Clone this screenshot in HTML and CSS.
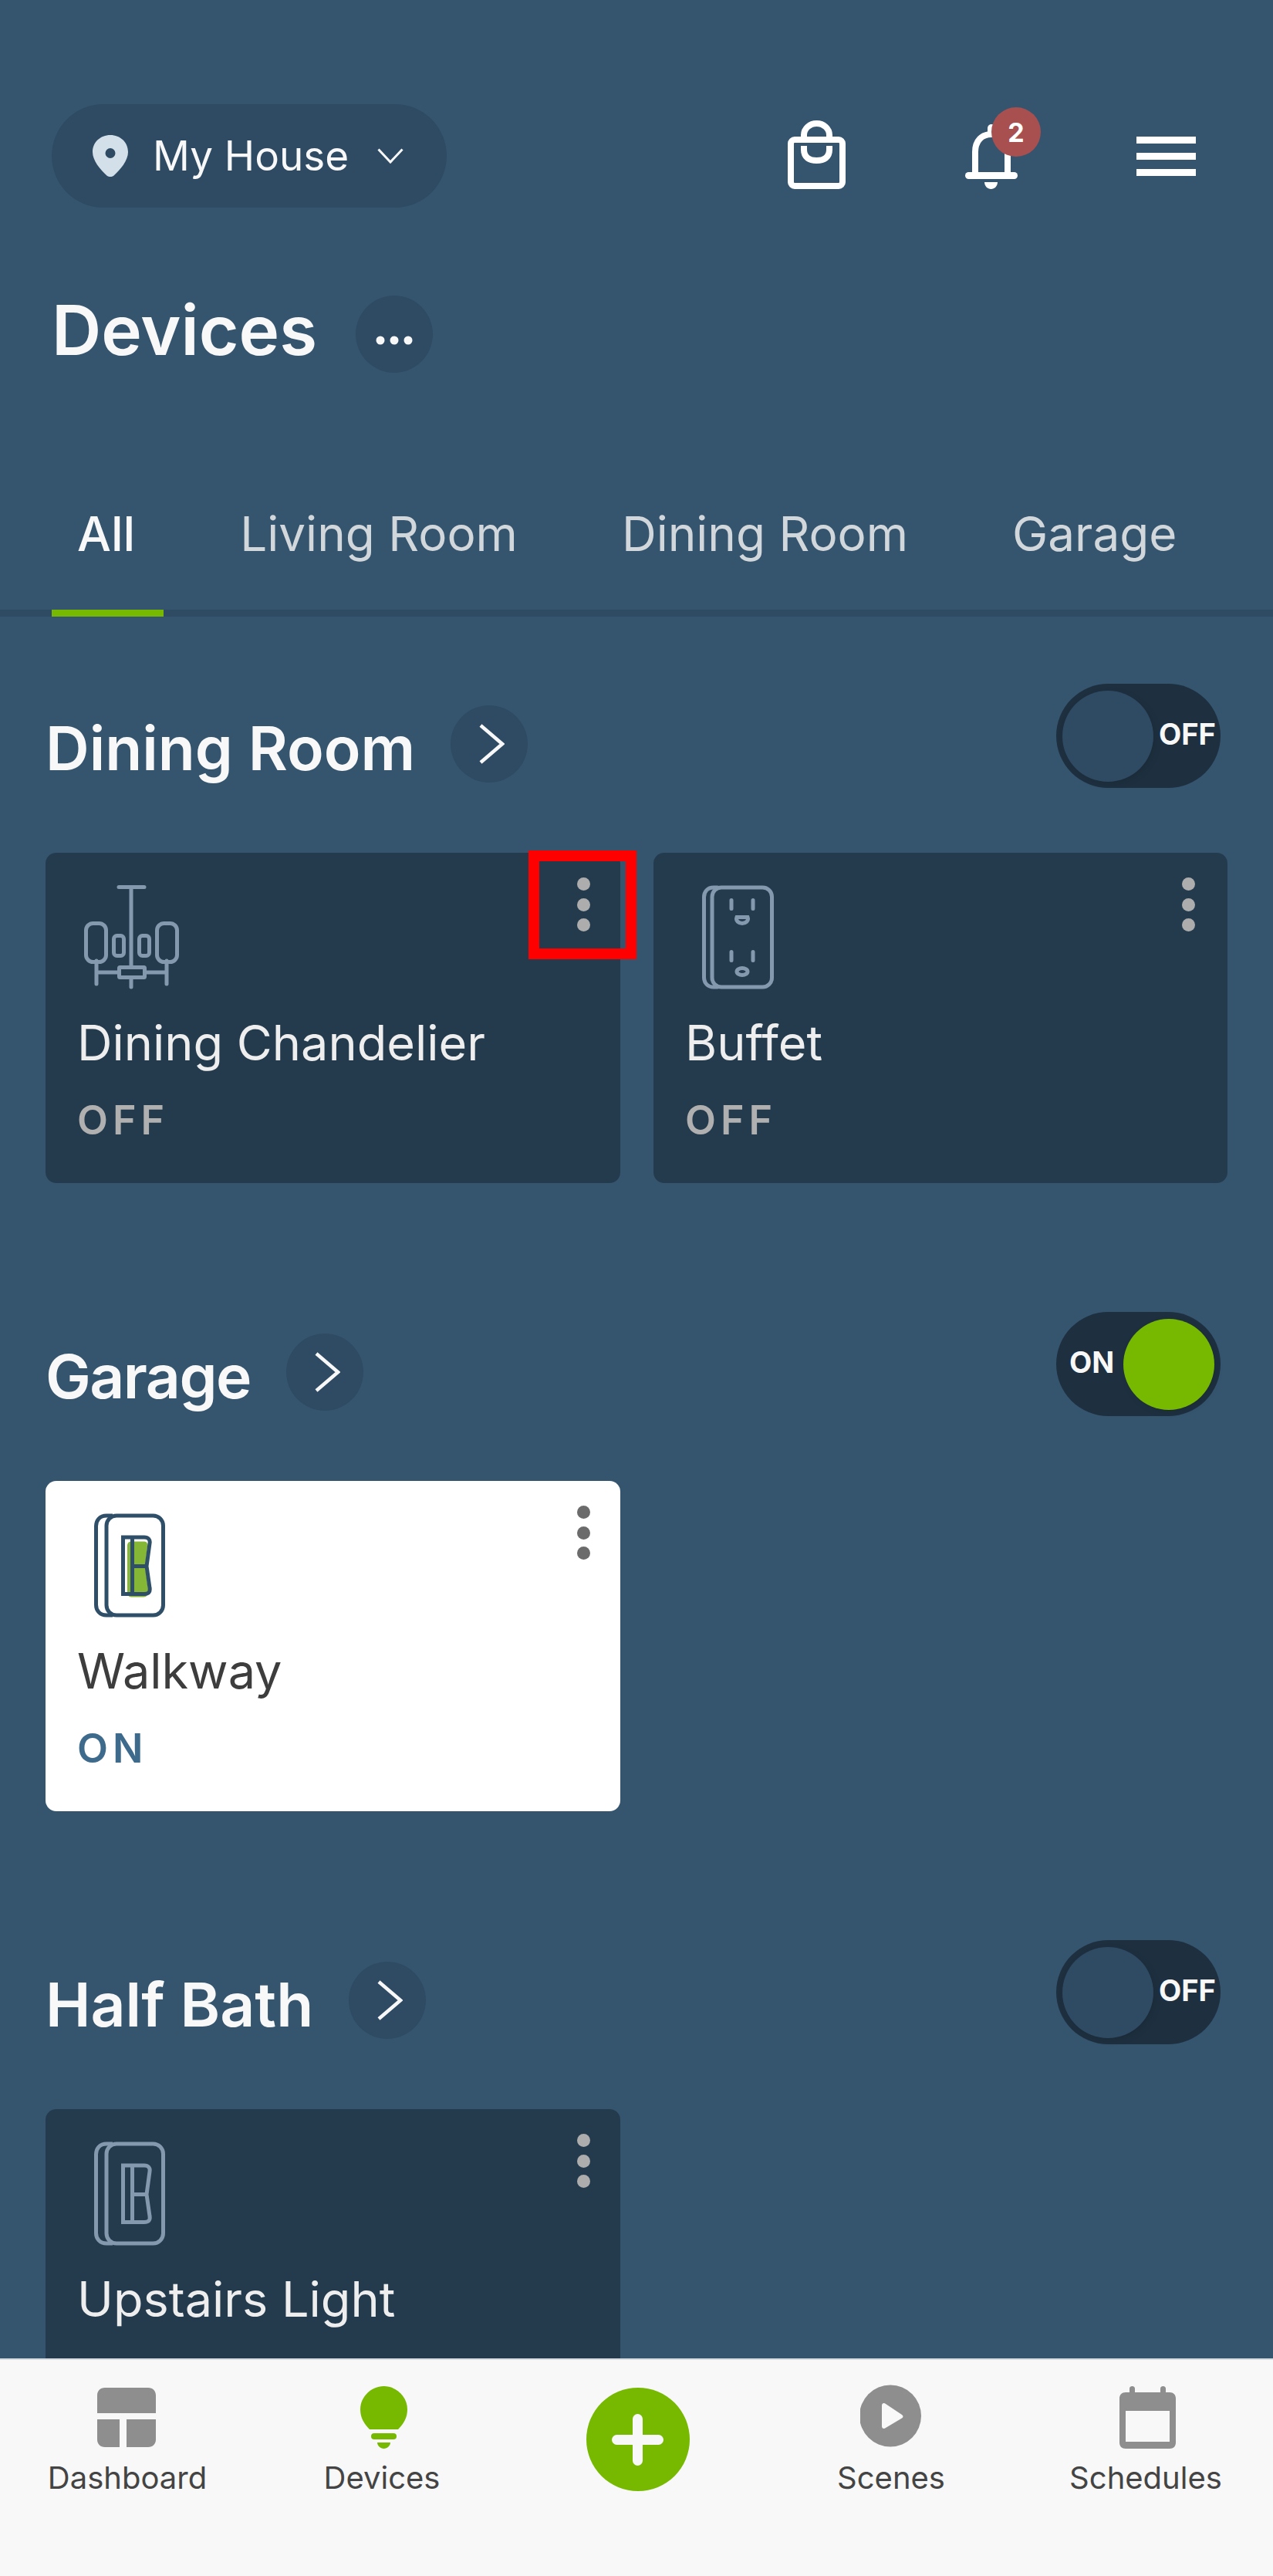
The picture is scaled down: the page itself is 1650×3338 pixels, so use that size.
FILE: index.html
```html
<!DOCTYPE html>
<html lang="en">
<head>
<meta charset="utf-8">
<title>Devices</title>
<link rel="stylesheet" href="styles.css">
</head>
<body>
<div class="app">
  <main class="main">
    <header class="topbar">
      <div class="house-pill">
        <svg class="pin" viewBox="0 0 46 54"><path fill-rule="evenodd" fill="#d3e0ea" d="M23 0C10 0 0 9.500 0 22c0 11 10 23 19 31 2 1.500 6 1.500 8 0 9-8 19-20 19-31C46 9.500 36 0 23 0zm0 17a6 6 0 1 1 0 13 6 6 0 0 1 0-13z"/></svg>
        <span class="house-name">My House</span>
        <svg class="chev" viewBox="0 0 34 20"><path d="M1.500 1.500 17 18 32.500 1.500" fill="none" stroke="#f8f8f8" stroke-width="3"/></svg>
      </div>
      <div class="top-icons">
        <svg class="bag" viewBox="0 0 75 89" fill="none" stroke="#fff" stroke-width="8">
          <rect x="4" y="25" width="67" height="60" rx="5"/>
          <path d="M21 25v-6a16.500 15 0 0 1 33 0v6"/>
          <path d="M21 33v5c0 10 7 14 16.500 14S54 48 54 38v-5"/>
        </svg>
        <div class="bell-wrap">
          <svg class="bell" viewBox="0 0 68 85">
            <path d="M13 64V37c0-15 9-23 21-23s21 8 21 23v27" fill="none" stroke="#fff" stroke-width="8"/>
            <path d="M29 16V6a5 5 0 0 1 10 0v10z" fill="#fff"/>
            <rect x="0" y="63" width="68" height="9" rx="4.500" fill="#fff"/>
            <path d="M25 76h17c0 5-4 9-8.500 9S25 81 25 76z" fill="#fff"/>
          </svg>
          <span class="badge">2</span>
        </div>
        <div class="burger"><i></i><i></i><i></i></div>
      </div>
    </header>

    <div class="title-row">
      <h1 class="title">Devices</h1>
      <div class="round-btn"><svg class="dots" viewBox="0 0 48 12"><circle cx="6" cy="6" r="5.500"/><circle cx="24" cy="6" r="5.500"/><circle cx="42" cy="6" r="5.500"/></svg></div>
    </div>

    <nav class="tabs">
      <span class="tab tab-active">All</span>
      <span class="tab">Living Room</span>
      <span class="tab">Dining Room</span>
      <span class="tab">Garage</span>
    </nav>

    <section class="room">
      <div class="room-head">
        <h2 class="room-name">Dining Room</h2>
        <div class="round-btn head-btn"><svg class="arrow" viewBox="0 0 33 52"><path d="M2 2l28 24L2 50" fill="none" stroke="#f8f8f8" stroke-width="4.500"/></svg></div>
        <div class="toggle toggle-off"><span class="knob"></span><span class="toggle-label">OFF</span></div>
      </div>
      <div class="cards">
        <article class="card">
          <svg class="dev-icon chandelier" viewBox="0 0 124 135" fill="none" stroke="#8499ad" stroke-width="5" stroke-linecap="round">
            <path d="M45 2.500h33M61 3v103"/>
            <rect x="2.500" y="49.500" width="26" height="50" rx="9"/>
            <rect x="94.500" y="49.500" width="26" height="50" rx="9"/>
            <rect x="38.500" y="65.500" width="13" height="26" rx="4"/>
            <rect x="71.500" y="65.500" width="13" height="26" rx="4"/>
            <rect x="45.500" y="106.500" width="33" height="13" rx="1"/>
            <path d="M16 98v30M107 98v30M16 113h29M79 113h28M61 122v10"/>
          </svg>
          <h3 class="dev-name">Dining Chandelier</h3>
          <p class="dev-state">OFF</p>
          <div class="kebab"><i></i><i></i><i></i></div>
          <div class="highlight"></div>
        </article>
        <article class="card">
          <svg class="dev-icon outlet" viewBox="0 0 93 134" fill="none" stroke="#8499ad" stroke-width="5" stroke-linecap="round">
            <path d="M20 2.500H15C7 2.500 2.500 8 2.500 15v104c0 7 4.500 12.500 12.500 12.500h5"/>
            <rect x="13" y="2.500" width="77.500" height="129" rx="12"/>
            <path d="M38 19v11M66 19v11M38 86v11M66 86v11"/>
            <path d="M45 41h14c2 5-3 8-7 8s-9-3-7-8z"/>
            <ellipse cx="52" cy="111.500" rx="7" ry="4.500"/>
          </svg>
          <h3 class="dev-name">Buffet</h3>
          <p class="dev-state">OFF</p>
          <div class="kebab"><i></i><i></i><i></i></div>
        </article>
      </div>
    </section>

    <section class="room">
      <div class="room-head">
        <h2 class="room-name room-name-tight">Garage</h2>
        <div class="round-btn head-btn"><svg class="arrow" viewBox="0 0 33 52"><path d="M2 2l28 24L2 50" fill="none" stroke="#f8f8f8" stroke-width="4.500"/></svg></div>
        <div class="toggle toggle-on"><span class="toggle-label">ON</span><span class="knob"></span></div>
      </div>
      <div class="cards">
        <article class="card card-on">
          <svg class="dev-icon switch" viewBox="0 0 92 134" fill="none" stroke="#2f4f69" stroke-width="5">
            <path d="M48 36h16c4 0 6 2 5 7l-3 25 4 30c1 6-1 10-6 10H48c-3 0-5-3-5-6V42c0-4 2-6 5-6z" fill="#86b636" stroke="none"/>
            <path d="M24 2.500H16C7 2.500 2.500 9 2.500 16v102c0 7 4.500 13.500 13.500 13.500h8"/>
            <rect x="16" y="2.500" width="73.500" height="129" rx="13"/>
            <path d="M37.500 30.500H65c5 0 8 3 7 8l-4 29.500 4 28c1 6-2 8-7 8H37.500zM49.500 30v73M49 68h19"/>
          </svg>
          <h3 class="dev-name">Walkway</h3>
          <p class="dev-state">ON</p>
          <div class="kebab"><i></i><i></i><i></i></div>
        </article>
      </div>
    </section>

    <section class="room">
      <div class="room-head">
        <h2 class="room-name">Half Bath</h2>
        <div class="round-btn head-btn"><svg class="arrow" viewBox="0 0 33 52"><path d="M2 2l28 24L2 50" fill="none" stroke="#f8f8f8" stroke-width="4.500"/></svg></div>
        <div class="toggle toggle-off"><span class="knob"></span><span class="toggle-label">OFF</span></div>
      </div>
      <div class="cards">
        <article class="card">
          <svg class="dev-icon switch" viewBox="0 0 92 134" fill="none" stroke="#8499ad" stroke-width="5">
            <path d="M24 2.500H16C7 2.500 2.500 9 2.500 16v102c0 7 4.500 13.500 13.500 13.500h8"/>
            <rect x="16" y="2.500" width="73.500" height="129" rx="13"/>
            <path d="M37.500 30.500H65c5 0 8 3 7 8l-4 29.500 4 28c1 6-2 8-7 8H37.500zM49.500 30v73M49 68h19"/>
          </svg>
          <h3 class="dev-name">Upstairs Light</h3>
          <div class="kebab"><i></i><i></i><i></i></div>
        </article>
      </div>
    </section>
  </main>

  <footer class="bottom-nav">
    <div class="nav-item">
      <svg class="nav-icon" viewBox="-1 -4 80 83"><path fill="#8e8e8e" d="M10 0h56c6 0 10 4 10 10v23H0V10C0 4 4 0 10 0zM0 41h29v36H10C4 77 0 73 0 67zM38 41h38v26c0 6-4 10-10 10H38z"/></svg>
      <span class="nav-label">Dashboard</span>
    </div>
    <div class="nav-item">
      <svg class="nav-icon" viewBox="-12 -2 80 83"><path fill="#76b900" d="M30.500 0C47 0 61 14 61 30c0 11-5 19-12 26H12C5 49 0 41 0 30 0 14 14 0 30.500 0z"/><rect x="14" y="61" width="33" height="8" rx="4" fill="#76b900"/><path fill="#76b900" d="M22 73h17c0 4-4 8-8.500 8S22 77 22 73z"/></svg>
      <span class="nav-label">Devices</span>
    </div>
    <div class="nav-item">
      <div class="add-btn"><svg class="plus" viewBox="0 0 67 67"><path d="M6.500 33.500h54M33.500 6.500v54" stroke="#f8f8f8" stroke-width="13" stroke-linecap="round"/></svg></div>
    </div>
    <div class="nav-item">
      <svg class="nav-icon" viewBox="1 0 80 83"><circle cx="40" cy="40.500" r="40" fill="#8e8e8e"/><path fill="#f8f8f8" d="M29 27c0-3 3-4 5-2l21 14c2 1.500 2 3 0 4.500L34 56c-2 2-5 1-5-2z"/></svg>
      <span class="nav-label">Scenes</span>
    </div>
    <div class="nav-item">
      <svg class="nav-icon" viewBox="-6 -2 80 83"><path fill-rule="evenodd" fill="#8e8e8e" d="M13 3c0-4 7-4 7 0v5h33V3c0-4 7-4 7 0v5h5c5 0 8 3 8 8v57c0 5-3 8-8 8H8c-5 0-8-3-8-8V16c0-5 3-8 8-8h5zM8 32v40h57V32z"/></svg>
      <span class="nav-label">Schedules</span>
    </div>
  </footer>
</div>
</body>
</html>
```
FILE: styles.css
```css
* { box-sizing: border-box; }
html, body { margin: 0; padding: 0; }
body { background: #35556f; font-family: Inter, "Noto Sans", sans-serif; }
h1, h2, h3, p { margin: 0; }

.app { width: 1650px; height: 3338px; display: flex; flex-direction: column; overflow: hidden; background: #35556f; }
.main { flex: 1; min-height: 0; overflow: hidden; }

.topbar { display: flex; justify-content: space-between; align-items: flex-start; padding: 135px 100px 0 67px; height: 269px; }
.house-pill { width: 512px; height: 134px; border-radius: 67px; background: #2f4b63; display: flex; align-items: center; padding-left: 53px; }
.pin { width: 46px; height: 54px; }
.house-name { margin-left: 32px; font-size: 53px; color: #f8f8f8; line-height: 1; }
.chev { width: 34px; height: 20px; margin-left: 37px; }
.top-icons { position: relative; width: 529px; height: 100px; display: flex; align-items: flex-start; }
.bag { width: 75px; height: 89px; margin-top: 21px; }
.bell-wrap { position: relative; width: 68px; height: 85px; margin-top: 25px; margin-left: 155px; }
.bell { width: 68px; height: 85px; display: block; }
.badge { position: absolute; left: 34px; top: -21px; width: 64px; height: 64px; border-radius: 50%; background: #a84f50; color: #fff; font-size: 34px; font-weight: 700; display: flex; align-items: center; justify-content: center; }
.burger { width: 77px; margin-top: 42px; margin-left: 154px; display: flex; flex-direction: column; gap: 12px; }
.burger i { display: block; height: 9px; background: #fff; }

.title-row { display: flex; align-items: center; padding-left: 67px; height: 100px; margin-top: 114px; gap: 50px; }
.title { font-size: 89px; font-weight: 600; color: #f8f8f8; line-height: 1; margin-bottom: 12px; }
.round-btn { width: 100px; height: 100px; border-radius: 50%; background: #2f4b63; display: flex; align-items: center; justify-content: center; flex: none; }
.dots { width: 48px; height: 12px; fill: #f8f8f8; margin-top: 16px; }
.arrow { width: 33px; height: 52px; margin-left: 7px; }

.tabs { display: flex; height: 186px; margin-top: 130px; border-bottom: 9px solid #2f4b63; padding-left: 67px; align-items: stretch; }
.tab { font-size: 62px; color: #d2d7dc; padding: 48px 33px 0; margin-right: 69px; border-bottom: 9px solid transparent; margin-bottom: -9px; line-height: 1; }
.tab-active { color: #f8f8f8; border-bottom-color: #76b900; font-weight: 500; padding-right: 37px; margin-right: 66px; }

.room { padding: 0 59px; margin-top: 167px; }
.tabs + .room { margin-top: 87px; }
.room-head { display: flex; align-items: flex-start; height: 135px; gap: 46px; }
.room-name { font-size: 78.500px; font-weight: 600; color: #f8f8f8; line-height: 1; margin-top: 45px; }
.room-name-tight { letter-spacing: -1.500px; }
.head-btn { margin-top: 28px; }
.toggle { margin-left: auto; margin-right: 9px; width: 213px; height: 135px; border-radius: 68px; background: #1e3040; display: flex; align-items: center; flex: none; padding: 0 8px; }
.knob { display: block; width: 118px; height: 118px; border-radius: 50%; flex: none; box-shadow: 3px 3px 8px rgba(0, 0, 0, 0.12); }
.toggle-off .knob { background: #2f4b63; }
.toggle-on .knob { background: #76b900; margin-left: auto; }
.toggle-label { color: #f8f8f8; font-size: 38px; font-weight: 700; line-height: 1; margin-top: -6px; }
.toggle-off .toggle-label { margin-left: 7px; }
.toggle-on .toggle-label { margin-left: 9px; }

.cards { display: grid; grid-template-columns: 745px 744px; gap: 43px; margin-top: 84px; }
.card { position: relative; height: 428px; background: #243b4e; border-radius: 14px; padding: 42px 40px 0 41px; }
.dev-icon { display: block; height: 135px; }
.chandelier { width: 124px; margin-left: 9px; }
.outlet { width: 93px; margin-left: 22px; }
.switch { width: 92px; margin-left: 22px; }
.dev-name { font-size: 63px; font-weight: 400; color: #eeeeee; line-height: 1; margin-top: 38px; }
.dev-state { font-size: 52px; font-weight: 600; color: #b0b0b0; letter-spacing: 6px; line-height: 1; margin-top: 43px; }
.card-on { background: #fff; }
.card-on .dev-name { color: #3d3d3d; }
.card-on .dev-state { color: #3e6a8c; }
.kebab { position: absolute; top: 32px; right: 39px; width: 17px; display: flex; flex-direction: column; gap: 9.500px; }
.card + .card .kebab { right: 42px; }
.kebab i { display: block; width: 17px; height: 17px; border-radius: 50%; background: #adadad; }
.card-on .kebab i { background: #6b6b6b; }
.highlight { position: absolute; left: 626px; top: -3px; width: 140px; height: 141px; border: 14px solid #f00; }

.bottom-nav { height: 282px; flex: none; background: #f8f8f8; display: grid; grid-template-columns: repeat(5, 330px); border-top: 2px solid #d8dde2; }
.nav-item { display: flex; flex-direction: column; align-items: center; padding-top: 32px; }
.nav-icon { height: 83px; width: 80px; display: block; }
.nav-label { font-size: 40px; color: #444; line-height: 1; margin-top: 18px; }
.add-btn { width: 134px; height: 134px; border-radius: 50%; background: #76b900; display: flex; align-items: center; justify-content: center; margin: 4px 0 0 3px; }
.plus { width: 67px; height: 67px; }
```
